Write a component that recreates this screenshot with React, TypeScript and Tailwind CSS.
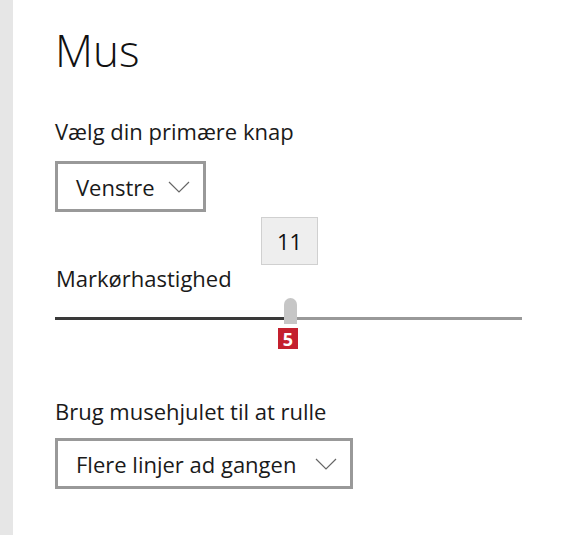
const font = { fontFamily: '"Open Sans", "Noto Sans", sans-serif' }

function Chevron() {
  return (
    <svg width="22" height="12" viewBox="0 0 22 12" fill="none" className="shrink-0">
      <polyline points="1,1 11,11 21,1" stroke="#666666" strokeWidth="1.2" />
    </svg>
  )
}

function Dropdown({ label, width }: { label: string; width: string }) {
  return (
    <div
      className={`flex h-[51px] items-center justify-between border-[3px] border-[#999999] bg-white pl-[18px] pr-[13px] ${width}`}
    >
      <span className="text-[22px] leading-[30px] text-[#1a1a1a]">{label}</span>
      <Chevron />
    </div>
  )
}

export default function App() {
  return (
    <div className="flex h-[535px] w-[573px] bg-white" style={font}>
      <div className="w-[13px] shrink-0 bg-[#e6e6e6]" />
      <div className="flex flex-1 flex-col pl-[42px]">
        <h1 className="mt-[22px] text-[44px] font-light leading-[56px] text-[#111111]">Mus</h1>

        <p className="mt-[38px] text-[22px] leading-[30px] text-[#1a1a1a]">Vælg din primære knap</p>
        <div className="mt-[15px]">
          <Dropdown label="Venstre" width="w-[151px]" />
        </div>

        {/* slider section */}
        <div className="relative mt-[5px] h-[140px] w-[467px]">
          <div className="absolute left-[206px] top-0 flex h-[48px] w-[57px] items-center justify-center border border-[#d0d0d0] bg-[#eeeeee] text-[22px] text-[#111111]">
            11
          </div>
          <p className="absolute left-[1px] top-[46px] text-[22px] leading-[30px] text-[#1a1a1a]">Markørhastighed</p>
          <div className="absolute left-0 top-[100px] h-[3px] w-[229px] bg-[#3a3a3a]" />
          <div className="absolute left-[229px] right-0 top-[100px] h-[3px] bg-[#999999]" />
          <div className="absolute left-[229px] top-[81px] h-[26px] w-[13px] rounded-t-full bg-[#c6c6c6]" />
          <div className="absolute left-[223px] top-[111px] flex h-[21px] w-[20px] items-center justify-center bg-[#c4202e] text-[18px] font-bold leading-none text-white">
            5
          </div>
        </div>

        <p className="mt-[39px] text-[22px] leading-[30px] text-[#1a1a1a]">Brug musehjulet til at rulle</p>
        <div className="mt-[12px]">
          <Dropdown label="Flere linjer ad gangen" width="w-[298px]" />
        </div>
      </div>
    </div>
  )
}
